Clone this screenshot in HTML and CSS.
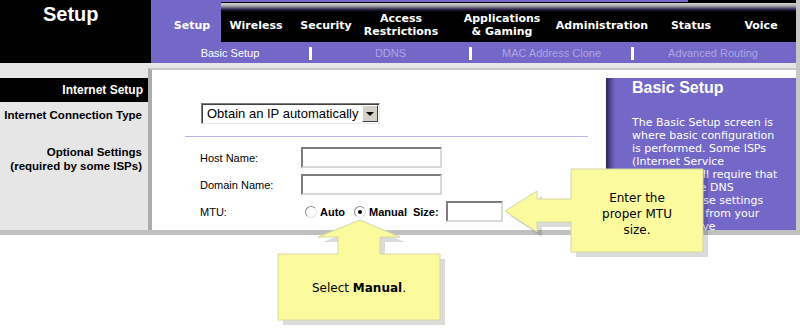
FILE: index.html
```html
<!DOCTYPE html>
<html lang="en">
<head>
    <meta charset="UTF-8">
    <title>Setup - Basic Setup</title>
    <link rel="stylesheet" href="styles.css">
</head>
<body>
<div class="page">
    <header class="top">
        <div class="brand">Setup</div>
        <nav class="nav">
            <div class="tabs">
                <div class="tab active t-setup">Setup</div>
                <div class="tab t-wireless">Wireless</div>
                <div class="tab t-security">Security</div>
                <div class="tab t-access">Access<br>Restrictions</div>
                <div class="tab t-apps">Applications<br>&amp; Gaming</div>
                <div class="tab t-admin">Administration</div>
                <div class="tab t-status">Status</div>
                <div class="tab t-voice">Voice</div>
            </div>
            <div class="subnav">
                <span class="sub current s1">Basic Setup</span><span class="bar"></span>
                <span class="sub s2">DDNS</span><span class="bar"></span>
                <span class="sub s3">MAC Address Clone</span><span class="bar"></span>
                <span class="sub s4">Advanced Routing</span>
            </div>
        </nav>
    </header>

    <div class="main">
        <aside class="side">
            <div class="side-head">Internet Setup</div>
            <div class="side-label">Internet Connection Type</div>
            <div class="side-label optional">Optional Settings<br>(required by some ISPs)</div>
        </aside>

        <section class="content">
            <div class="form">
                <div class="select-row">
                    <div class="fake-select">
                        <span class="select-text">Obtain an IP automatically</span>
                        <span class="select-btn"><i class="caret"></i></span>
                    </div>
                </div>
                <div class="rule"></div>
                <div class="field">
                    <label>Host Name:</label>
                    <span class="text-input wide"></span>
                </div>
                <div class="field">
                    <label>Domain Name:</label>
                    <span class="text-input wide"></span>
                </div>
                <div class="field">
                    <label>MTU:</label>
                    <span class="radio"></span><b class="opt">Auto</b>
                    <span class="radio checked"></span><b class="opt">Manual</b>
                    <b class="opt size-lbl">Size:</b>
                    <span class="text-input small"></span>
                </div>
            </div>

            <div class="help">
                <h2>Basic Setup</h2>
                <p>The Basic Setup screen is<br>where basic configuration<br>is performed. Some ISPs<br>(Internet Service<br>Providers) will require that<br>you enter the DNS<br>settings. These settings<br>are obtained from your<br>ISP. If you have</p>
            </div>
        </section>
    </div>
    <div class="bottom-bar"></div>

    <div class="callout callout-mtu">
        <svg width="212" height="96" viewBox="0 0 212 96">
            <path class="shadow" transform="translate(5 5)" d="M5,46 L37,26 L37,34 L71,34 L71,4 L203,4 L203,87 L71,87 L71,57 L37,57 L37,67 Z"/>
            <path class="bubble" d="M5,46 L37,26 L37,34 L71,34 L71,4 L203,4 L203,87 L71,87 L71,57 L37,57 L37,67 Z"/>
        </svg>
        <div class="callout-text">Enter the<br>proper MTU<br>size.</div>
    </div>

    <div class="callout callout-manual">
        <svg width="180" height="116" viewBox="0 0 180 116">
            <path class="shadow" transform="translate(5 5)" d="M88,5 L128,22 L108,22 L108,39 L168,39 L168,105 L6,105 L6,39 L66,39 L66,22 L46,22 Z"/>
            <path class="bubble" d="M88,5 L128,22 L108,22 L108,39 L168,39 L168,105 L6,105 L6,39 L66,39 L66,22 L46,22 Z"/>
        </svg>
        <div class="callout-text">Select <b>Manual</b>.</div>
    </div>
</div>
</body>
</html>
```

FILE: styles.css
```css
body {
    margin: 0;
    background: #fff;
    font-family: "Liberation Sans", Arial, sans-serif;
}
.page {
    position: relative;
    width: 800px;
    height: 331px;
    overflow: hidden;
}

/* header */
.top {
    display: flex;
    height: 63px;
    background: #000;
    border-right: 4px solid #c8c8c8;
}
.brand {
    width: 151px;
    box-sizing: border-box;
    padding: 3px 0 0 43px;
    color: #fff;
    font-weight: bold;
    font-size: 20px;
}
.nav {
    flex: 1;
    display: flex;
    flex-direction: column;
}
.tabs {
    display: flex;
    height: 42px;
    background:
        linear-gradient(#7368c8, #7368c8) 0 0 / 537px 2px no-repeat,
        linear-gradient(to bottom, #000 0, #000 3px, #d4d4d4 3px, #a8a8a8 6px, #5c5674 8px, #1c1636 10px, #000 12px);
}
.tab {
    display: flex;
    align-items: center;
    justify-content: center;
    box-sizing: border-box;
    padding-top: 8px;
    color: #fff;
    font-family: "DejaVu Sans", Verdana, sans-serif;
    font-weight: bold;
    font-size: 11px;
    line-height: 13px;
    text-align: center;
    white-space: nowrap;
}
.tab.active {
    background: #7368c8;
    padding-left: 12px;
}
.t-setup { width: 70px; }
.t-wireless { width: 70px; }
.t-security { width: 70px; }
.t-access { width: 80px; }
.t-apps { width: 122px; }
.t-admin { width: 78px; }
.t-status { width: 100px; }
.t-voice { width: 40px; }

.subnav {
    display: flex;
    align-items: center;
    height: 21px;
    background: #7368c8;
    font-size: 11px;
}
.sub {
    text-align: center;
    color: #aca6e6;
    white-space: nowrap;
}
.sub.current { color: #fff; }
.s1 { width: 158px; }
.s2 { width: 157px; }
.s3 { width: 159px; }
.s4 { width: 158px; }
.bar {
    width: 3px;
    height: 13px;
    margin-top: 1px;
    background: #fff;
}

/* main area */
.main {
    display: flex;
    height: 167px;
    background: #e6e6e6;
    border-right: 4px solid #c8c8c8;
}
.side {
    width: 148px;
    padding-top: 15px;
}
.side-head {
    height: 24px;
    line-height: 24px;
    padding-right: 5px;
    background: #000;
    color: #fff;
    font-weight: bold;
    font-size: 12px;
    text-align: right;
}
.side-label {
    margin-top: 6px;
    padding-right: 6px;
    font-weight: bold;
    font-size: 11.5px;
    line-height: 14px;
    text-align: right;
    white-space: nowrap;
}
.side-label.optional { margin-top: 23px; }

.content {
    flex: 1;
    display: flex;
    margin-top: 5px;
    background: #fff;
    border-top: 2px solid #c6c6c6;
    border-left: 4px solid #acacac;
}
.form {
    flex: 1;
    padding-top: 33px;
    font-size: 11px;
}
.select-row { padding-left: 49px; }
.fake-select {
    display: flex;
    align-items: center;
    box-sizing: border-box;
    width: 179px;
    height: 21px;
    border: 1px solid;
    border-color: #7c7c7c #e8e8e8 #e8e8e8 #7c7c7c;
    box-shadow: inset 1px 1px #404040;
}
.select-text {
    flex: 1;
    padding-left: 5px;
    font-size: 13px;
    white-space: nowrap;
}
.select-btn {
    display: flex;
    align-items: center;
    justify-content: center;
    width: 14px;
    height: 15px;
    margin-right: 1px;
    background: #d4d0c8;
    border: 1px solid;
    border-color: #fff #404040 #404040 #fff;
}
.caret {
    border-left: 4px solid transparent;
    border-right: 4px solid transparent;
    border-top: 4px solid #000;
}
.rule {
    width: 403px;
    margin: 12px 0 0 33px;
    border-top: 1px solid #bab2ea;
}
.field {
    display: flex;
    align-items: center;
    height: 21px;
    margin-top: 6px;
    padding-left: 48px;
}
.rule + .field { margin-top: 10px; }
.field label { width: 101px; }
.text-input {
    box-sizing: border-box;
    height: 21px;
    border: 2px solid;
    border-color: #7c7c7c #d8d8d8 #d8d8d8 #7c7c7c;
    background: #fff;
}
.text-input.wide { width: 141px; }
.text-input.small { width: 57px; }
.radio {
    box-sizing: border-box;
    position: relative;
    width: 12px;
    height: 12px;
    margin-left: 4px;
    border-radius: 50%;
    border: 1px solid;
    border-color: #888 #e4e4e4 #e4e4e4 #888;
    background: #fff;
}
.radio + .opt { margin-left: 3px; }
.opt + .radio { margin-left: 9px; }
.radio.checked::after {
    content: "";
    position: absolute;
    left: 3px;
    top: 3px;
    width: 4px;
    height: 4px;
    border-radius: 50%;
    background: #000;
}
.opt { font-size: 11px; }
.size-lbl { margin: 0 7px 0 6px; }

.help {
    width: 190px;
    box-sizing: border-box;
    margin-top: 8px;
    padding-left: 26px;
    overflow: hidden;
    color: #fff;
    background: linear-gradient(to right, #2a2650 0, #4a4390 4px, #6c62bc 8px, #7368c8 10px);
}
.help h2 {
    margin: 0;
    font-size: 16px;
    line-height: 20px;
}
.help p {
    margin: 18px 0 0;
    font-family: "DejaVu Sans", Verdana, sans-serif;
    font-size: 11px;
    line-height: 13px;
    white-space: nowrap;
}
.bottom-bar {
    height: 5px;
    background: #c0c0c0;
}

/* callouts */
.callout {
    position: absolute;
}
.callout svg { display: block; }
.callout .shadow { fill: rgba(0, 0, 0, 0.14); }
.callout .bubble {
    fill: #fbfb9e;
    stroke: #d6d6a4;
    stroke-width: 1;
}
.callout-text {
    position: absolute;
    font-family: "DejaVu Sans", Verdana, sans-serif;
    font-size: 12px;
    line-height: 16px;
    text-align: center;
    color: #000;
}
.callout-mtu {
    left: 500px;
    top: 165px;
}
.callout-mtu .callout-text {
    left: 71px;
    top: 25px;
    width: 132px;
}
.callout-manual {
    left: 272px;
    top: 215px;
}
.callout-manual .callout-text {
    left: 6px;
    top: 65px;
    width: 162px;
}
```
